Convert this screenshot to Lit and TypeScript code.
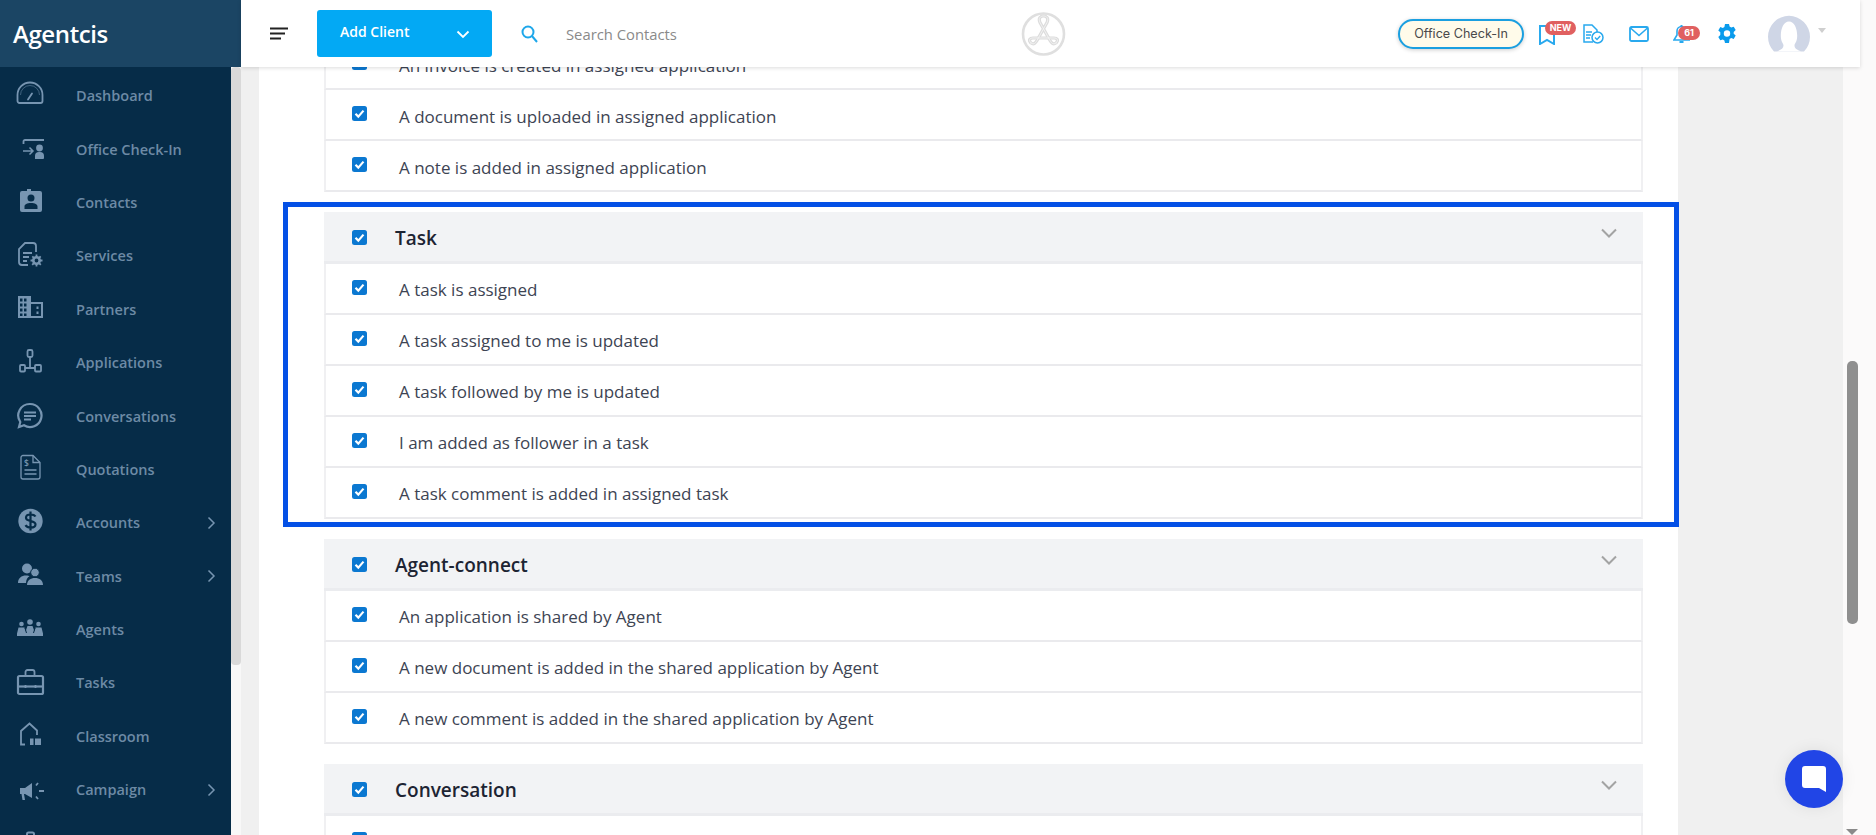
import { LitElement, html, css, svg } from "lit";
import { customElement } from "lit/decorators.js";

const icons: Record<string, unknown> = {
  dashboard: svg`<path d="M1.500 20v-6a12.500 12.500 0 0 1 25 0v6a2 2 0 0 1-2 2h-21a2 2 0 0 1-2-2z" fill="none" stroke="currentColor" stroke-width="1.800"/><path d="M4.500 14a9.500 9.500 0 0 1 19 0" fill="none" stroke="currentColor" stroke-width="1" opacity=".5"/><path d="M12 18.500l4-6" stroke="currentColor" stroke-width="1.800" stroke-linecap="round"/>`,
  checkin: svg`<path d="M7.500 10V7.500A1.500 1.500 0 0 1 9 6h19" fill="none" stroke="currentColor" stroke-width="1.800"/><path d="M7 17h10M13.500 13.500l3.500 3.500-3.500 3.500" fill="none" stroke="currentColor" stroke-width="1.500"/><circle cx="23.500" cy="14" r="3.400" fill="currentColor"/><path d="M19 25v-3a4 4 0 0 1 4-4h1a4 4 0 0 1 4 4v2a1 1 0 0 1-1 1z" fill="currentColor"/>`,
  contacts: svg`<path fill-rule="evenodd" d="M6 4h5V2h4v2h9a2 2 0 0 1 2 2v17a2 2 0 0 1-2 2H6a2 2 0 0 1-2-2V6a2 2 0 0 1 2-2zm9 3.500a3.500 3.500 0 1 0 0 7 3.500 3.500 0 0 0 0-7zM8.500 22h13v-2.500c0-2-2.500-3.500-6.500-3.500s-6.500 1.500-6.500 3.500z" fill="currentColor"/>`,
  services: svg`<path d="M12 24H6a3 3 0 0 1-3-3V8l6-6h8a3 3 0 0 1 3 3v6" fill="none" stroke="currentColor" stroke-width="1.800"/><path d="M7 12h9M7 16h6M7 20h4" stroke="currentColor" stroke-width="1.800"/><circle cx="20.500" cy="19.500" r="3.200" fill="none" stroke="currentColor" stroke-width="2.600"/><path d="M20.500 13.500v2.500M20.500 23v2.500M14.500 19.500H17M24 19.500h2.500M16.300 15.300l1.800 1.800M23 22l1.800 1.800M24.700 15.300L23 17M18 22l-1.800 1.800" stroke="currentColor" stroke-width="1.800"/>`,
  partners: svg`<path fill-rule="evenodd" d="M2 2h13v6h12v16H2zM4 4.500v3h2.500v-3zm4 0v3h2.500v-3zm-4 5v3h2.500v-3zm4 0v3h2.500v-3zm-4 5v3h2.500v-3zm4 0v3h2.500v-3zm-4 5v2.500h2.500V19.500zm4 0v2.500h2.500V19.500zM15 10v12h10V10zm5.500 2.500v2.500h2v-2.500zm0 5v2.500h2v-2.500z" fill="currentColor"/>`,
  applications: svg`<rect x="11.500" y="2" width="5" height="7" rx="1.500" fill="none" stroke="currentColor" stroke-width="1.800"/><rect x="4" y="17" width="5" height="6.500" rx="1" fill="none" stroke="currentColor" stroke-width="1.800"/><rect x="19" y="17" width="6" height="6.500" rx="1" fill="none" stroke="currentColor" stroke-width="1.800"/><path d="M14 9v11M9 20h10" stroke="currentColor" stroke-width="1.800"/>`,
  conversations: svg`<path d="M14 3a11.500 11.500 0 1 1-6 21.300L3 26l1.300-5A11.500 11.500 0 0 1 14 3z" fill="none" stroke="currentColor" stroke-width="2.200"/><path d="M8 11.500h12M8 15h12M8 18.500h7" stroke="currentColor" stroke-width="1.800"/>`,
  quotations: svg`<path d="M7 1.500h10l7 7V23a2 2 0 0 1-2 2H7a2 2 0 0 1-2-2V3.500a2 2 0 0 1 2-2z" fill="none" stroke="currentColor" stroke-width="1.300"/><path d="M17 1.500v7h7" fill="none" stroke="currentColor" stroke-width="1.300"/><path d="M8.500 16h12M8.500 20h12" stroke="currentColor" stroke-width="1.500"/><text x="8" y="12" font-size="8.500" font-family="Open Sans" fill="currentColor">$</text>`,
  accounts: svg`<circle cx="14.500" cy="13" r="12.200" fill="currentColor"/><path d="M19.500 8.500c-1-1.500-3-2-5-2-2.800 0-4.500 1.300-4.500 3.300 0 4.500 9.500 2 9.500 6.500 0 2-2 3.300-4.700 3.300-2.300 0-4.300-.8-5.300-2.500M14.500 3.500v19" fill="none" stroke="#062c48" stroke-width="2.200"/>`,
  teams: svg`<circle cx="11" cy="7.500" r="5" fill="currentColor"/><path d="M2 22c0-5 3.500-7.500 8-7.500 2 0 3 .4 3.500.8-2 1.200-3.500 3.500-3.500 6.700z" fill="currentColor"/><circle cx="19" cy="11.500" r="4.300" fill="currentColor" stroke="#062c48" stroke-width="1"/><path d="M11 24c0-4.500 3.500-7 8-7s8 2.500 8 7z" fill="currentColor"/>`,
  agents: svg`<circle cx="14" cy="7" r="2.800" fill="currentColor"/><circle cx="5.500" cy="9" r="2.300" fill="currentColor"/><circle cx="22.500" cy="9" r="2.300" fill="currentColor"/><path d="M1 21v-2.500l1.500-6h6l1 4 2-5.500h5l2 5.500 1-4h6l1.500 6V21z" fill="currentColor"/><path d="M9 13l1.500 5M19 13l-1.500 5" stroke="#062c48" stroke-width="1"/>`,
  tasks: svg`<path d="M9.500 8V4a2 2 0 0 1 2-2h5a2 2 0 0 1 2 2v4" fill="none" stroke="currentColor" stroke-width="1.800"/><rect x="2" y="8" width="25" height="18" rx="1.500" fill="none" stroke="currentColor" stroke-width="2.200"/><path d="M2 18.500h25" stroke="currentColor" stroke-width="2.200"/><path d="M9.500 17v3M19.500 17v3" stroke="currentColor" stroke-width="1.800"/>`,
  classroom: svg`<path d="M9 23.500H5V10l8.500-7.500L21 9.500V14" fill="none" stroke="currentColor" stroke-width="1.800"/><path d="M14 17.500h3.500V24H14zM19 17.500h6V24h-6z" fill="currentColor"/>`,
  campaign: svg`<path d="M4 13h5l7-5v15l-7-4H8l1 6H6.500l-1-6H4z" fill="currentColor"/><path d="M22 8l-2 2.500M23 16h5M22 24l-2-2.500" stroke="currentColor" stroke-width="1.800"/>`,
  reports: svg`<path d="M11 8V6a1.500 1.500 0 0 1 1.500-1.500h4A1.500 1.500 0 0 1 18 6v2" fill="none" stroke="currentColor" stroke-width="2"/><rect x="4" y="8" width="21" height="18" rx="2" fill="currentColor"/>`,
};

const nav: [string, string, boolean][] = [
  ["dashboard", "Dashboard", false],
  ["checkin", "Office Check-In", false],
  ["contacts", "Contacts", false],
  ["services", "Services", false],
  ["partners", "Partners", false],
  ["applications", "Applications", false],
  ["conversations", "Conversations", false],
  ["quotations", "Quotations", false],
  ["accounts", "Accounts", true],
  ["teams", "Teams", true],
  ["agents", "Agents", false],
  ["tasks", "Tasks", false],
  ["classroom", "Classroom", false],
  ["campaign", "Campaign", true],
  ["reports", "", false],
];

const groups: { title: string | null; rows: string[] }[] = [
  {
    title: null,
    rows: [
      "An invoice is created in assigned application",
      "A document is uploaded in assigned application",
      "A note is added in assigned application",
    ],
  },
  {
    title: "Task",
    rows: [
      "A task is assigned",
      "A task assigned to me is updated",
      "A task followed by me is updated",
      "I am added as follower in a task",
      "A task comment is added in assigned task",
    ],
  },
  {
    title: "Agent-connect",
    rows: [
      "An application is shared by Agent",
      "A new document is added in the shared application by Agent",
      "A new comment is added in the shared application by Agent",
    ],
  },
  { title: "Conversation", rows: ["A new Phone Number is shared"] },
];

const check = html`<span class="check"
  ><svg viewBox="0 0 15 15" width="15" height="15">
    <path d="M3.500 7.800l2.800 2.800 5.200-6" fill="none" stroke="#fff" stroke-width="2.200" /></svg
></span>`;

const logoA = "M10 31C13 33 14.500 31 16 28.500L26 10.500C28 6 25.500 4 22.500 4C19.500 4 17 6 19 10.500L29 28.500C30.500 31 32 33 35 31";
const logoBar = "M10 31C7 28 9 26 12 26H33C36 26 38 28 35 31";

@customElement("app-root")
export class AppRoot extends LitElement {
  static styles = css`
    :host {
      display: block;
      height: 835px;
      overflow: hidden;
      font-family: "Open Sans", sans-serif;
      background: #f0f0f0;
      position: relative;
    }
    .shell {
      display: flex;
      height: 835px;
    }
    .side {
      width: 241px;
      flex: none;
      display: flex;
      flex-direction: column;
      overflow: hidden;
    }
    .brand {
      height: 67px;
      flex: none;
      background: #1b4564;
      color: #fff;
      font-size: 24px;
      font-weight: 600;
      line-height: 67px;
      padding-left: 13px;
      letter-spacing: -0.4px;
    }
    .side-body {
      flex: 1;
      display: flex;
      min-height: 0;
      background: #f8f8f8;
    }
    .nav {
      width: 231px;
      flex: none;
      background: #062c48;
      padding-top: 2px;
    }
    .item {
      height: 53.400px;
      display: flex;
      align-items: center;
      color: #6d8aa5;
      font-size: 14.500px;
      font-weight: 600;
    }
    .item svg.ic {
      width: 30px;
      height: 30px;
      margin-left: 16px;
      margin-right: 30px;
      color: #7795b1;
      flex: none;
    }
    .item .label {
      flex: 1;
    }
    .item .arrow {
      margin-right: 15px;
    }
    .thumb {
      width: 10px;
      height: 598px;
      background: #d9d9d9;
      border-radius: 4px;
    }
    .main {
      flex: 1;
      display: flex;
      flex-direction: column;
      min-width: 0;
      position: relative;
    }
    .top {
      height: 67px;
      flex: none;
      background: #fff;
      box-shadow: 0 1px 4px rgba(0, 0, 0, 0.14);
      display: flex;
      align-items: center;
      position: relative;
      z-index: 3;
      margin-right: 16px;
    }
    .menu {
      margin-left: 29px;
      margin-right: 29px;
      width: 18px;
      height: 13px;
      flex: none;
    }
    .add {
      width: 175px;
      height: 47px;
      margin-top: -1px;
      background: #03a9f4;
      border-radius: 3px;
      color: #fff;
      font-size: 14px;
      font-weight: 600;
      display: flex;
      align-items: center;
      justify-content: space-between;
      padding: 0 22px 4px 23px;
      box-sizing: border-box;
      flex: none;
    }
    .search-ic {
      margin-left: 29px;
      flex: none;
    }
    .search {
      margin-left: 28px;
      color: #8a8a8a;
      font-size: 14.800px;
      width: 300px;
      flex: none;
    }
    .logo {
      margin-left: 155px;
      flex: none;
    }
    .pill {
      margin-left: 332px;
      width: 126px;
      height: 30px;
      box-sizing: border-box;
      border: 2px solid #1a9fe0;
      border-radius: 15px;
      background: #fffbea;
      color: #4a4a4a;
      font-family: Inter, sans-serif;
      font-size: 12.600px;
      display: flex;
      align-items: center;
      justify-content: center;
      box-shadow: 0 1px 4px rgba(0, 0, 0, 0.2);
      flex: none;
    }
    .tools {
      display: flex;
      align-items: center;
      flex: none;
    }
    .ti {
      position: relative;
      flex: none;
      display: block;
    }
    .badge {
      position: absolute;
      background: #e06060;
      color: #fff;
      font-weight: 700;
      font-size: 9px;
      line-height: 14px;
      height: 14px;
      border-radius: 7px;
      text-align: center;
      font-family: Inter, sans-serif;
    }
    .avatar {
      margin-left: 31px;
      flex: none;
    }
    .caret {
      margin-left: 8px;
      width: 0;
      height: 0;
      border: 4px solid transparent;
      border-top: 5px solid #cfcfcf;
      margin-top: -2px;
    }
    .below {
      flex: 1;
      display: flex;
      min-height: 0;
    }
    .page {
      flex: 1;
      padding-left: 18px;
      min-width: 0;
    }
    .card {
      width: 1419px;
      height: 768px;
      background: #fff;
      box-sizing: border-box;
      padding: 0 35px 0 65px;
      overflow: hidden;
      display: flex;
      flex-direction: column;
      gap: 20px;
      position: relative;
    }
    .group {
      flex: none;
    }
    .group.first {
      margin-top: -28px;
    }
    .group.first .txt {
      margin-top: 4px;
    }
    .head {
      height: 52px;
      box-sizing: border-box;
      background: #f2f3f5;
      border-bottom: 3px solid #ebecef;
      display: flex;
      align-items: center;
      padding-left: 28px;
      font-size: 19px;
      font-weight: 600;
      color: #1d2433;
      position: relative;
    }
    .head .check {
      margin-top: 1px;
    }
    .head .name {
      margin-left: 28px;
      margin-top: 2px;
    }
    .head .chev {
      position: absolute;
      right: 25px;
      top: 16px;
    }
    .row {
      height: 51px;
      box-sizing: border-box;
      border-left: 2px solid #f0f0f2;
      border-right: 2px solid #f0f0f2;
      border-bottom: 2px solid #eaeaed;
      display: flex;
      align-items: center;
      padding-left: 26px;
      font-size: 17px;
      color: #3d4453;
    }
    .row .txt {
      margin-left: 32px;
      margin-top: 2px;
    }
    .check {
      width: 15px;
      height: 15px;
      background: #0b78d1;
      border-radius: 2.500px;
      flex: none;
      display: block;
      margin-top: -2px;
    }
    .check svg {
      display: block;
    }
    .mark {
      position: absolute;
      left: 283px;
      top: 202px;
      width: 1396px;
      height: 325px;
      box-sizing: border-box;
      border: 5px solid #0450e6;
      z-index: 2;
      pointer-events: none;
    }
    .bar {
      position: absolute;
      right: 0;
      top: 0;
      bottom: 0;
      width: 33px;
      background: #fbfafa;
      z-index: 1;
    }
    .bar .t {
      position: absolute;
      left: 4px;
      top: 361px;
      width: 11px;
      height: 263px;
      background: #8f8f8f;
      border-radius: 5px;
    }
    .bar .d {
      position: absolute;
      left: 3px;
      top: 829px;
      width: 0;
      height: 0;
      border: 6px solid transparent;
      border-top: 6px solid #8a8a8a;
    }
    .chat {
      position: absolute;
      left: 1785px;
      top: 750px;
      width: 58px;
      height: 58px;
      background: #2145e6;
      border-radius: 50%;
      box-shadow: 0 0 16px rgba(0, 0, 0, 0.08);
      z-index: 4;
      display: flex;
      align-items: center;
      justify-content: center;
    }
  `;

  renderChev() {
    return html`<svg class="chev" width="18" height="10" viewBox="0 0 18 10">
      <path d="M2 1.500l7 7 7-7" fill="none" stroke="#a3a3a3" stroke-width="2" />
    </svg>`;
  }

  renderGroup(g: (typeof groups)[number], i: number) {
    return html`<div class="group ${i === 0 ? "first" : ""}">
      ${g.title
        ? html`<div class="head">${check}<span class="name">${g.title}</span>${this.renderChev()}</div>`
        : ""}
      ${g.rows.map((r) => html`<div class="row">${check}<span class="txt">${r}</span></div>`)}
    </div>`;
  }

  render() {
    return html`
      <div class="shell">
        <aside class="side">
          <div class="brand">Agentcis</div>
          <div class="side-body">
            <nav class="nav">
              ${nav.map(
                ([ic, label, arrow]) => html`<div class="item">
                  <svg class="ic" viewBox="0 0 30 30">${icons[ic]}</svg>
                  ${label ? html`<span class="label">${label}</span>` : ""}
                  ${arrow
                    ? html`<svg class="arrow" width="9" height="14" viewBox="0 0 9 14">
                        <path d="M1.500 1.500l5.500 5.500-5.500 5.500" fill="none" stroke="#7795b1" stroke-width="1.500" />
                      </svg>`
                    : ""}
                </div>`
              )}
            </nav>
            <div class="thumb"></div>
          </div>
        </aside>
        <div class="main">
          <header class="top">
            <svg class="menu" viewBox="0 0 18 13">
              <path d="M0 1.500h18M0 6.500h15M0 11.500h11" stroke="#222" stroke-width="2" />
            </svg>
            <div class="add">
              <span>Add Client</span>
              <svg width="14" height="9" viewBox="0 0 14 9" style="margin-top:7px">
                <path d="M1.500 1.500l5.500 5.500 5.500-5.500" fill="none" stroke="#fff" stroke-width="1.800" />
              </svg>
            </div>
            <svg class="search-ic" width="17" height="18" viewBox="0 0 17 18">
              <circle cx="7" cy="7" r="5.500" fill="none" stroke="#1ea7ea" stroke-width="2" />
              <path d="M11 11l5 6" stroke="#1ea7ea" stroke-width="2" />
            </svg>
            <span class="search">Search Contacts</span>
            <svg class="logo" width="45" height="44" viewBox="0 0 45 44">
              <circle cx="22.500" cy="22" r="20.500" fill="none" stroke="#dfdfdf" stroke-width="2.600" />
              <path d=${logoBar} fill="none" stroke="#dcdcdc" stroke-width="3.200" />
              <path d=${logoA} fill="none" stroke="#dcdcdc" stroke-width="3.200" />
              <path d=${logoBar} fill="none" stroke="#f6f6f6" stroke-width="0.800" />
              <path d=${logoA} fill="none" stroke="#f6f6f6" stroke-width="0.800" />
            </svg>
            <div class="pill">Office Check-In</div>
            <div class="tools">
              <span class="ti" style="width:37px;height:24px;margin-left:15px">
                <svg width="16" height="20" viewBox="0 0 16 20" style="position:absolute;left:0;top:3px">
                  <path d="M1 1h14v18l-7-4-7 4z" fill="none" stroke="#29a9ee" stroke-width="2" />
                </svg>
                <span class="badge" style="left:6px;top:-1px;width:31px">NEW</span>
              </span>
              <svg class="ti" width="22" height="20" viewBox="0 0 22 20" style="margin-left:6px">
                <path d="M11 18H2V1h8l5 5v3" fill="none" stroke="#29a9ee" stroke-width="1.500" />
                <path d="M4 8h6M4 11h5M4 14h4" stroke="#29a9ee" stroke-width="1.300" />
                <circle cx="15.500" cy="13.500" r="5.500" fill="#fff" stroke="#29a9ee" stroke-width="1.500" />
                <path d="M13 13.500l2 2 3.200-3.500" fill="none" stroke="#29a9ee" stroke-width="1.400" />
              </svg>
              <svg class="ti" width="20" height="16" viewBox="0 0 20 16" style="margin-left:25px">
                <rect x="1" y="1" width="18" height="14" rx="1.500" fill="none" stroke="#29a9ee" stroke-width="1.800" />
                <path d="M1.500 2l8.500 7.500L18.500 2" fill="none" stroke="#29a9ee" stroke-width="1.600" />
              </svg>
              <span class="ti" style="width:27px;height:20px;margin-left:24px">
                <svg width="17" height="19" viewBox="0 0 17 19" style="position:absolute;left:0;top:0">
                  <path d="M1 16l3-5V7a4.500 4.500 0 0 1 9 0v4l3 5z" fill="none" stroke="#29a9ee" stroke-width="1.600" />
                  <path d="M6.500 18h4M8.500 1v2" stroke="#29a9ee" stroke-width="2" />
                </svg>
                <span class="badge" style="left:5px;top:2px;width:22px">61</span>
              </span>
              <svg class="ti" width="20" height="19" viewBox="0 0 18 19" style="margin-left:17px">
                <path fill-rule="evenodd" d="M7 0h4l.6 2.600 1.600.9 2.500-.8 2 3.400-2 1.800v1.800l2 1.800-2 3.400-2.500-.8-1.600.9L11 19H7l-.6-2.600-1.600-.9-2.500.8-2-3.400 2-1.800V8.300L.3 6.500l2-3.400 2.500.8 1.600-.9zM9 6.300a3.200 3.200 0 1 0 0 6.400 3.200 3.200 0 0 0 0-6.400z" fill="#0a9bec" />
              </svg>
              <svg class="avatar" width="42" height="38" viewBox="0 0 42 38">
                <path d="M6 36.500A21 21 0 1 1 36 36.500z" fill="#cfd6e6" />
                <path d="M9 36.500c4-2 6.500-3 6.500-6 0-2-2-3-2.500-7-1-8 2-17 8-17s9 9 8 17c-.5 4-2.500 5-2.500 7 0 3 2.500 4 6.500 6z" fill="#fff" />
              </svg>
              <span class="caret"></span>
            </div>
          </header>
          <div class="below">
            <div class="page">
              <div class="card">${groups.map((g, i) => this.renderGroup(g, i))}</div>
            </div>
          </div>
        </div>
      </div>
      <div class="mark"></div>
      <div class="bar"><div class="t"></div><div class="d"></div></div>
      <div class="chat">
        <svg width="26" height="28" viewBox="0 0 26 28">
          <path d="M4 1h18a3 3 0 0 1 3 3v23l-7-4H4a3 3 0 0 1-3-3V4a3 3 0 0 1 3-3z" fill="#fff" />
        </svg>
      </div>
    `;
  }
}
